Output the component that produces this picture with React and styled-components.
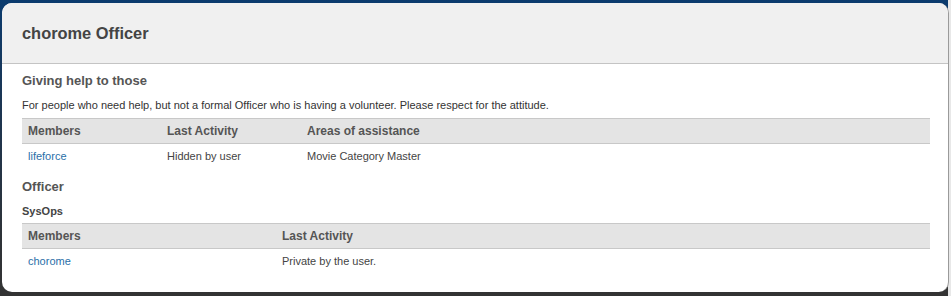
import React from "react";
import styled, { createGlobalStyle } from "styled-components";

const GlobalStyle = createGlobalStyle`
  html, body {
    margin: 0;
    padding: 0;
  }
  body {
    font-family: "Liberation Sans", Arial, sans-serif;
    color: #333;
  }
`;

const Page = styled.div`
  width: 951px;
  height: 296px;
  box-sizing: border-box;
  padding: 3px 2px 4px 2px;
  background:
    linear-gradient(to right, transparent 948px, #e8e8e8 948px),
    linear-gradient(to bottom, #0b3b6e 0%, #1e3550 40%, #2e3338 80%, #333 100%);
`;

const Panel = styled.div`
  height: 100%;
  box-sizing: border-box;
  background: #fff;
  border-radius: 10px;
  border-right: 1px solid #9a9a9a;
  overflow: hidden;
  display: flex;
  flex-direction: column;
`;

const PanelHeader = styled.div`
  height: 60px;
  flex: none;
  background: #f0f0f0;
  border-bottom: 1px solid #c4c4c4;
  display: flex;
  align-items: center;
  padding: 0 20px;
`;

const Title = styled.h1`
  margin: 0;
  font-size: 16.4px;
  font-weight: bold;
  color: #444;
`;

const Body = styled.div`
  padding: 8px 18px 0 20px;
`;

const SectionTitle = styled.h2`
  margin: ${(p) => p.$top || 0}px 0 0;
  font-size: 13px;
  line-height: 18px;
  font-weight: bold;
  color: #555;
`;

const Description = styled.p`
  margin: 8px 0 0;
  font-size: 11px;
  line-height: 14px;
  color: #333;
`;

const SubTitle = styled.h3`
  margin: 8px 0 0;
  font-size: 11px;
  line-height: 14px;
  font-weight: bold;
  color: #444;
`;

const Table = styled.div`
  margin-top: ${(p) => p.$top}px;
  border-top: 1px solid #c8c8c8;
`;

const Row = styled.div`
  display: grid;
  grid-template-columns: ${(p) => p.$cols};
  height: ${(p) => (p.$head ? 24 : 25)}px;
  align-items: center;
  background: ${(p) => (p.$head ? "#e4e4e4" : "#fff")};
  border-bottom: ${(p) => (p.$head ? "1px solid #c8c8c8" : "none")};
`;

const HeadCell = styled.div`
  padding-left: 6px;
  font-size: 12px;
  font-weight: bold;
  color: #555;
`;

const Cell = styled.div`
  padding-left: 6px;
  padding-bottom: 2px;
  font-size: 11px;
  color: #444;
`;

const MemberLink = styled.a`
  color: #2a6fa8;
  text-decoration: none;
`;

function MemberTable({ cols, headers, rows, top }) {
  return (
    <Table $top={top}>
      <Row $head $cols={cols}>
        {headers.map((h) => (
          <HeadCell key={h}>{h}</HeadCell>
        ))}
      </Row>
      {rows.map((r) => (
        <Row key={r[0]} $cols={cols}>
          <Cell>
            <MemberLink href="#">{r[0]}</MemberLink>
          </Cell>
          {r.slice(1).map((c, i) => (
            <Cell key={i}>{c}</Cell>
          ))}
        </Row>
      ))}
    </Table>
  );
}

export default function App() {
  return (
    <>
      <GlobalStyle />
      <Page>
        <Panel>
          <PanelHeader>
            <Title>chorome Officer</Title>
          </PanelHeader>
          <Body>
            <SectionTitle>Giving help to those</SectionTitle>
            <Description>
              For people who need help, but not a formal Officer who is having a volunteer. Please
              respect for the attitude.
            </Description>
            <MemberTable
              top={6}
              cols="139px 140px 1fr"
              headers={["Members", "Last Activity", "Areas of assistance"]}
              rows={[["lifeforce", "Hidden by user", "Movie Category Master"]]}
            />
            <SectionTitle $top={9}>Officer</SectionTitle>
            <SubTitle>SysOps</SubTitle>
            <MemberTable
              top={5}
              cols="254px 1fr"
              headers={["Members", "Last Activity"]}
              rows={[["chorome", "Private by the user."]]}
            />
          </Body>
        </Panel>
      </Page>
    </>
  );
}
